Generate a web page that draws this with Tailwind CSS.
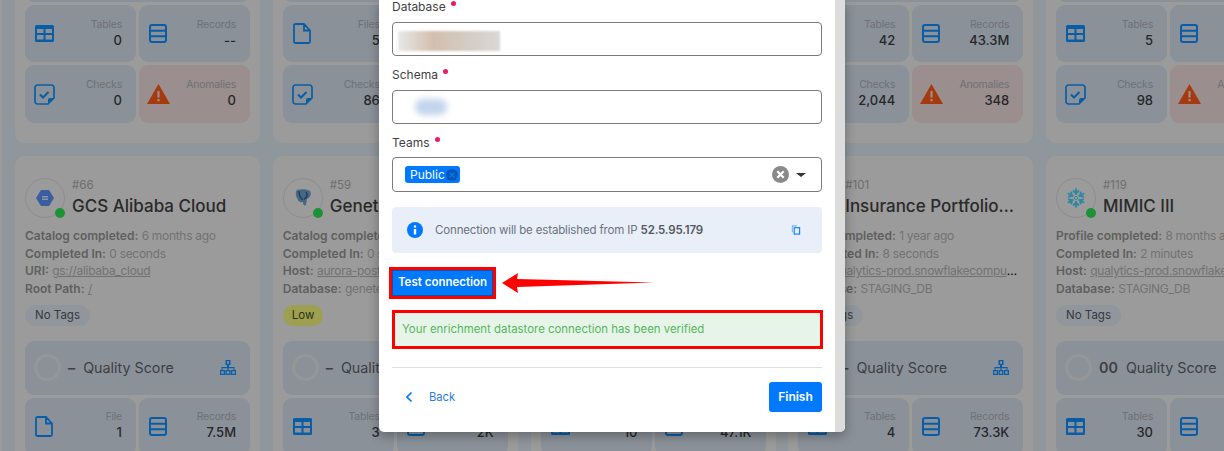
<!DOCTYPE html>
<html lang="en">
<head>
    <meta charset="UTF-8">
    <meta name="viewport" content="width=device-width, initial-scale=1.0">
    <title>Add Datastore - Enrichment</title>
    <script src="https://cdn.jsdelivr.net/npm/@tailwindcss/browser@4"></script>
</head>
<body class="relative h-[451px] overflow-hidden bg-[#dce8f0] font-['Inter',sans-serif]">

<!-- icons -->
<svg class="hidden">
    <symbol id="i-table" viewBox="0 0 19 17"><path fill="currentColor" fill-rule="evenodd" d="M1.500 0h16A1.500 1.500 0 0 1 19 1.500v14a1.500 1.500 0 0 1-1.500 1.500h-16A1.500 1.500 0 0 1 0 15.500v-14A1.500 1.500 0 0 1 1.500 0zM2 4v4h6.500V4zM10.500 4v4H17V4zM2 10v4.500h6.500V10zM10.500 10v4.500H17V10z"/></symbol>
    <symbol id="i-records" viewBox="0 0 18 19"><rect x="1" y="1" width="16" height="17" rx="2" fill="none" stroke="currentColor" stroke-width="2"/><path d="M1 6.800h16M1 12.300h16" stroke="currentColor" stroke-width="2"/></symbol>
    <symbol id="i-file" viewBox="0 0 18 21"><path d="M2.500 1H11l6 6.500V18.500a1.500 1.500 0 0 1-1.500 1.500h-13A1.500 1.500 0 0 1 1 18.500v-16A1.500 1.500 0 0 1 2.500 1zM11 1v6.500h6" fill="none" stroke="currentColor" stroke-width="1.800"/></symbol>
    <symbol id="i-check" viewBox="0 0 21 21"><path d="M3.500 1h14A2.500 2.500 0 0 1 20 3.500V14l-6 6H3.500A2.500 2.500 0 0 1 1 17.500v-14A2.500 2.500 0 0 1 3.500 1z" fill="none" stroke="currentColor" stroke-width="1.700"/><path d="M14 20v-4a2 2 0 0 1 2-2h4z" fill="currentColor"/><path d="M6 10.500l3 3 5.500-5.500" fill="none" stroke="currentColor" stroke-width="2"/></symbol>
    <symbol id="i-warn" viewBox="0 0 23 20"><path fill="currentColor" fill-rule="evenodd" d="M11.500 0L23 20H0zM10.400 7v6.500h2.200V7zM10.400 15v2.200h2.200V15z"/></symbol>
    <symbol id="i-tree" viewBox="0 0 16 15"><path fill="currentColor" fill-rule="evenodd" d="M5.500 0h5v5H9v2h5.500v3H16v5h-5v-5h2.500V8.200H8.600V10H10.500v5h-5v-5h1.900V8.200H2.500V10H5v5H0v-5h1.500V7H7V5H5.500zM7 1.300v2.400h2V1.300zM1.300 11.300v2.400h2.400v-2.400zM6.800 11.300v2.400h2.400v-2.400zM12.300 11.300v2.400h2.400v-2.400z"/></symbol>
    <symbol id="i-arm" viewBox="0 0 20 20"><path d="M10 0.500v6.500M7 2.500l3 3 3-3" fill="none" stroke="#48d0f5" stroke-width="1.900"/></symbol>
</svg>

<div class="absolute left-0 top-0 h-full w-[2px] bg-[#efefef]"></div>

<!-- datastore cards behind the dialog -->
<div id="cards" class="-mt-[62px] ml-[15px] grid w-[1300px] grid-cols-[repeat(5,245px)] gap-x-[12.75px] gap-y-[13px]"></div>

<!-- backdrop -->
<div class="absolute inset-0 bg-black/35"></div>

<!-- dialog -->
<div class="absolute left-[379px] top-0 flex h-[432px] w-[466px] overflow-hidden rounded-b-[5px] bg-white shadow-[0_4px_12px_rgba(0,0,0,0.3)]">
    <div class="-mt-[3px] flex-1 pl-[13px] pr-[13px] text-[#3f3f46]">
        <label class="flex h-[19px] items-center pt-[1px] text-[12px] leading-none">Database <span class="mb-[8px] ml-[5px] size-[5px] rounded-full bg-[#ec1a63]"></span></label>
        <div class="mt-[6px] h-[34px] rounded-[4px] border border-[#7b7b7b] pl-[5px] pt-[8px]">
            <div class="h-[20px] w-[102px] bg-gradient-to-r from-[#e8e8e8] via-[#d2bfae] via-35% to-[#d8d8d8] blur-[1px]"></div>
        </div>
        <label class="mt-[9px] flex h-[19px] items-center pt-[1px] text-[12px] leading-none">Schema <span class="mb-[8px] ml-[5px] size-[5px] rounded-full bg-[#ec1a63]"></span></label>
        <div class="mt-[6px] h-[34px] rounded-[4px] border border-[#7b7b7b] pl-[22px] pt-[8px]">
            <div class="h-[16px] w-[32px] rounded-full bg-[#c3d4ec] blur-[3px]"></div>
        </div>
        <label class="mt-[9px] flex h-[19px] items-center pt-[1px] text-[12px] leading-none">Teams <span class="mb-[8px] ml-[5px] size-[5px] rounded-full bg-[#ec1a63]"></span></label>
        <div class="mt-[5px] flex h-[35px] items-center rounded-[4px] border border-[#7b7b7b] pl-[12px] pr-[15px]">
            <span class="flex h-[17px] w-[55px] items-center justify-between rounded-[3px] bg-[#0179ff] pl-[5px] pr-[2px] text-[12px] leading-[17px] text-white">Public
                <svg class="size-[12px]" viewBox="0 0 12 12"><circle cx="6" cy="6" r="6" fill="#0356b3"/><path d="M3.500 3.500l5 5m0-5l-5 5" stroke="#0179ff" stroke-width="1.300"/></svg>
            </span>
            <svg class="ml-auto size-[17px]" viewBox="0 0 17 17"><circle cx="8.500" cy="8.500" r="8.500" fill="#8a8a8a"/><path d="M5.300 5.300l6.400 6.400m0-6.400l-6.400 6.400" stroke="#fff" stroke-width="2.200"/></svg>
            <svg class="ml-[7px] h-[4px] w-[10px]" viewBox="0 0 10 4"><path d="M0 0h10L5 4z" fill="#333"/></svg>
        </div>
        <div class="mt-[15px] flex h-[46px] items-center rounded-[4px] bg-[#e8eff9] pl-[15px] pr-[21px] text-[11.500px] tracking-[-0.15px] text-[#6c7280]">
            <svg class="mr-[12px] size-[16px]" viewBox="0 0 16 16"><circle cx="8" cy="8" r="8" fill="#0179ff"/><circle cx="8" cy="4.500" r="1.200" fill="#fff"/><path d="M6.800 7h2.400v5.500H6.800z" fill="#fff"/></svg>
            <span class="pt-[1px]">Connection will be established from IP <b class="font-semibold text-[#55595f]">52.5.95.179</b></span>
            <svg class="ml-auto size-[10px]" viewBox="0 0 10 11"><path d="M1 8V1h5" fill="none" stroke="#7fb4f5" stroke-width="1.200"/><rect x="3" y="3" width="6" height="7" fill="none" stroke="#0179ff" stroke-width="1.200"/></svg>
        </div>
        <div class="mt-[14px] flex items-center">
            <button class="-ml-[3px] h-[32px] w-[107px] border-[3px] border-[#ff0000] bg-[#0179ff] text-[11.500px] font-semibold text-white shadow-[inset_0_0_0_1px_#0356b3]">Test connection</button>
            <svg class="ml-[6px] h-[22px] w-[152px]" viewBox="0 0 152 22"><path d="M0 11L16 1l-1 6 137 3.500L15 15l1 6z" fill="#ff0000"/></svg>
        </div>
        <div class="mt-[11px] -mr-[1px] flex h-[39px] items-center border-[3px] border-[#ff0000] bg-[#e7f5e9] pl-[7px] text-[11.400px] text-[#55b560]">Your enrichment datastore connection has been verified</div>
        <div class="mt-[18px] border-t border-[#dedede]"></div>
        <div class="mt-[14px] flex items-center">
            <button class="flex items-center pl-[13px] pt-[1px] text-[11.200px] text-[#2a7de8]">
                <svg class="mr-[16px] h-[12px] w-[8px]" viewBox="0 0 8 12"><path d="M6.500 1.500L2 6l4.500 4.500" fill="none" stroke="#0179ff" stroke-width="1.700"/></svg>
                Back
            </button>
            <button class="ml-auto h-[30px] w-[53px] rounded-[3px] bg-[#0179ff] text-[12px] font-semibold text-white">Finish</button>
        </div>
    </div>
    <div class="w-[10px] rounded-br-[5px] bg-[#dcdcdc]"></div>
</div>

<script>
const arms = [0, 60, 120, 180, 240, 300].map(a => `<use href="#i-arm" width="20" height="20" transform="rotate(${a} 10 10)"></use>`).join('');
const avatars = {
    gcs: '<svg class="size-[18px]" viewBox="0 0 18 18"><path d="M5 1h8l5 8-5 8H5L0 9z" fill="#5a90f5"/><path d="M6 7h6v1.500H6zM6 9.500h6V11H6z" fill="#d8e2fb"/></svg>',
    pg: '<svg class="size-[18px]" viewBox="0 0 18 18"><path d="M3 1c4-1 10-1 13 1 2 3 0 7-3 8l-1 6c-2 1-3 0-3-3-3 1-5-1-6-4C2 7 1 3 3 1z" fill="#6f9fc9"/><path d="M5 2c0 4 1 7 4 9M12 3c2 3 1 6-2 7" fill="none" stroke="#2f5f8f" stroke-width="1.500"/></svg>',
    snow: `<svg class="size-[20px]" viewBox="0 0 20 20">${arms}<path d="M10 8l2 2-2 2-2-2z" fill="none" stroke="#48d0f5" stroke-width="1"/></svg>`,
    none: ''
};

function tile(icon, iconClass, label, value, tall, red) {
    return `<div class="${tall ? 'h-[58px]' : 'h-[57px]'} ${red ? 'bg-[#eddada]' : 'bg-[#d6dfec]'} flex items-center justify-between rounded-[9px] pl-[9px] pr-[14px]">
        <svg class="${iconClass} ${red ? 'text-[#ff5a18]' : 'text-[#0f90ff]'} shrink-0"><use href="#${icon}"></use></svg>
        <div class="pb-[3px] text-right">
            <div class="text-[10.500px] leading-[16px] tracking-[-0.2px] text-[#aaaeb5]">${label}</div>
            <div class="text-[13px] font-medium leading-[15px] text-[#3a3d42]">${value}</div>
        </div>
    </div>`;
}

const T = ['i-table', 'ml-[1px] h-[17px] w-[19px]'];
const R = ['i-records', 'ml-[1px] h-[19px] w-[18px]'];
const F = ['i-file', 'ml-[1px] h-[21px] w-[18px]'];
const C = ['i-check', 'h-[21px] w-[21px]'];
const W = ['i-warn', '-ml-[1px] h-[20px] w-[23px]'];

function quality(score) {
    return `<div class="flex h-[54px] items-center rounded-[9px] bg-[#d6dfec] pl-[9px] pr-[14px] text-[14.300px] text-[#5f6268]">
        <span class="size-[27px] shrink-0 rounded-full border-[3px] border-[#e6e6e6]"></span>
        <span class="ml-[7px] mr-[8px] font-semibold">${score}</span>Quality Score
        <svg class="ml-auto h-[15px] w-[16px] text-[#0f90ff]"><use href="#i-tree"></use></svg>
    </div>`;
}

function stats(a, b) {
    return `<div class="mt-[3px] grid grid-cols-2 gap-[3px]">${a}${b}</div>`;
}

function topCard(t1, t2, t3, t4) {
    return `<div class="rounded-[10px] bg-[#efefef] px-[10px] pb-[20px] pt-[10px]">
        ${quality('–')}${stats(t1, t2)}${stats(t3, t4)}
    </div>`;
}

function mainCard(c) {
    const lines = c.lines.map(l => `<div class="h-[17.700px] truncate">
        <span class="font-semibold text-[#929292]">${l[0]}:</span>
        <span class="${l[2] ? 'underline' : ''} tracking-[-0.3px] text-[#b0b0b0]">${l[1]}</span></div>`).join('');
    return `<div class="rounded-[10px] bg-[#efefef] px-[10px] pb-[10px] pt-[22px]">
        <div class="flex">
            <div class="relative flex size-[40px] shrink-0 items-center justify-center rounded-full border border-[#d8d8d8]">
                ${avatars[c.logo]}
                <span class="absolute -bottom-[1px] -right-[1px] size-[10px] rounded-full bg-[#2bdf54]"></span>
            </div>
            <div class="ml-[7px] min-w-0 pr-[6px]">
                <div class="text-[11.500px] leading-[14px] text-[#a9a9a9]">#${c.id}</div>
                <div class="mt-[1px] truncate text-[17px] font-medium leading-[26px] text-[#414141]">${c.title}</div>
            </div>
        </div>
        <div class="mt-[8px] pr-[4px] text-[12px] leading-[17.700px]">${lines}</div>
        <div class="mt-[7px] flex">
            <span class="${c.tagClass} flex h-[21px] items-center rounded-full px-[9px] pt-[1px] text-[11.500px]">${c.tag}</span>
        </div>
        <div class="mt-[15px]">${quality(c.score)}</div>
        ${stats(c.t1, c.t2)}
    </div>`;
}

const noTag = 'border border-[#dde5ec] bg-[#dde7f0] text-[#55585e]';

document.getElementById('cards').innerHTML = [
    topCard(tile(...T, 'Tables', '0'), tile(...R, 'Records', '--'), tile(...C, 'Checks', '0', true), tile(...W, 'Anomalies', '0', true, true)),
    topCard(tile(...F, 'Files', '5'), tile(...R, 'Records', '1.2M'), tile(...C, 'Checks', '86', true), tile(...W, 'Anomalies', '12', true, true)),
    topCard(tile(...T, 'Tables', '8'), tile(...R, 'Records', '9.1K'), tile(...C, 'Checks', '40', true), tile(...W, 'Anomalies', '3', true, true)),
    topCard(tile(...T, 'Tables', '42'), tile(...R, 'Records', '43.3M'), tile(...C, 'Checks', '2,044', true), tile(...W, 'Anomalies', '348', true, true)),
    topCard(tile(...T, 'Tables', '5'), tile(...R, 'Records', '2K'), tile(...C, 'Checks', '98', true), tile(...W, 'Anomalies', '7', true, true)),
    mainCard({ id: 66, logo: 'gcs', title: 'GCS Alibaba Cloud', tag: 'No Tags', tagClass: noTag, score: '–',
        lines: [['Catalog completed', '6 months ago'], ['Completed In', '0 seconds'], ['URI', 'gs://alibaba_cloud', 1], ['Root Path', '/', 1]],
        t1: tile(...F, 'File', '1'), t2: tile(...R, 'Records', '7.5M') }),
    mainCard({ id: 59, logo: 'pg', title: 'Genetech', tag: 'Low', tagClass: 'bg-[#f0f67c] text-[#4a4d20]', score: '–',
        lines: [['Catalog completed', '6 months ago'], ['Completed In', '0 seconds'], ['Host', 'aurora-postgresql.cluster.amazonaws.com', 1], ['Database', 'genetech']],
        t1: tile(...T, 'Tables', '3'), t2: tile(...R, 'Records', '2K') }),
    mainCard({ id: 80, logo: 'none', title: 'Datastore', tag: 'No Tags', tagClass: noTag, score: '–',
        lines: [['Scan completed', '1 year ago'], ['Completed In', '8 seconds'], ['Host', 'localhost', 1], ['Database', 'main']],
        t1: tile(...T, 'Tables', '10'), t2: tile(...R, 'Records', '47.1K') }),
    mainCard({ id: 101, logo: 'none', title: 'Insurance Portfolio - Staging', tag: 'No Tags', tagClass: noTag, score: '–',
        lines: [['Scan completed', '1 year ago'], ['Completed In', '8 seconds'], ['Host', 'qualytics-prod.snowflakecomputing.com', 1], ['Database', 'STAGING_DB']],
        t1: tile(...T, 'Tables', '4'), t2: tile(...R, 'Records', '73.3K') }),
    mainCard({ id: 119, logo: 'snow', title: 'MIMIC III', tag: 'No Tags', tagClass: noTag, score: '00',
        lines: [['Profile completed', '8 months ago'], ['Completed In', '2 minutes'], ['Host', 'qualytics-prod.snowflakecomputing.com', 1], ['Database', 'STAGING_DB']],
        t1: tile(...T, 'Tables', '30'), t2: tile(...R, 'Records', '1.1M') })
].join('');
</script>
</body>
</html>
